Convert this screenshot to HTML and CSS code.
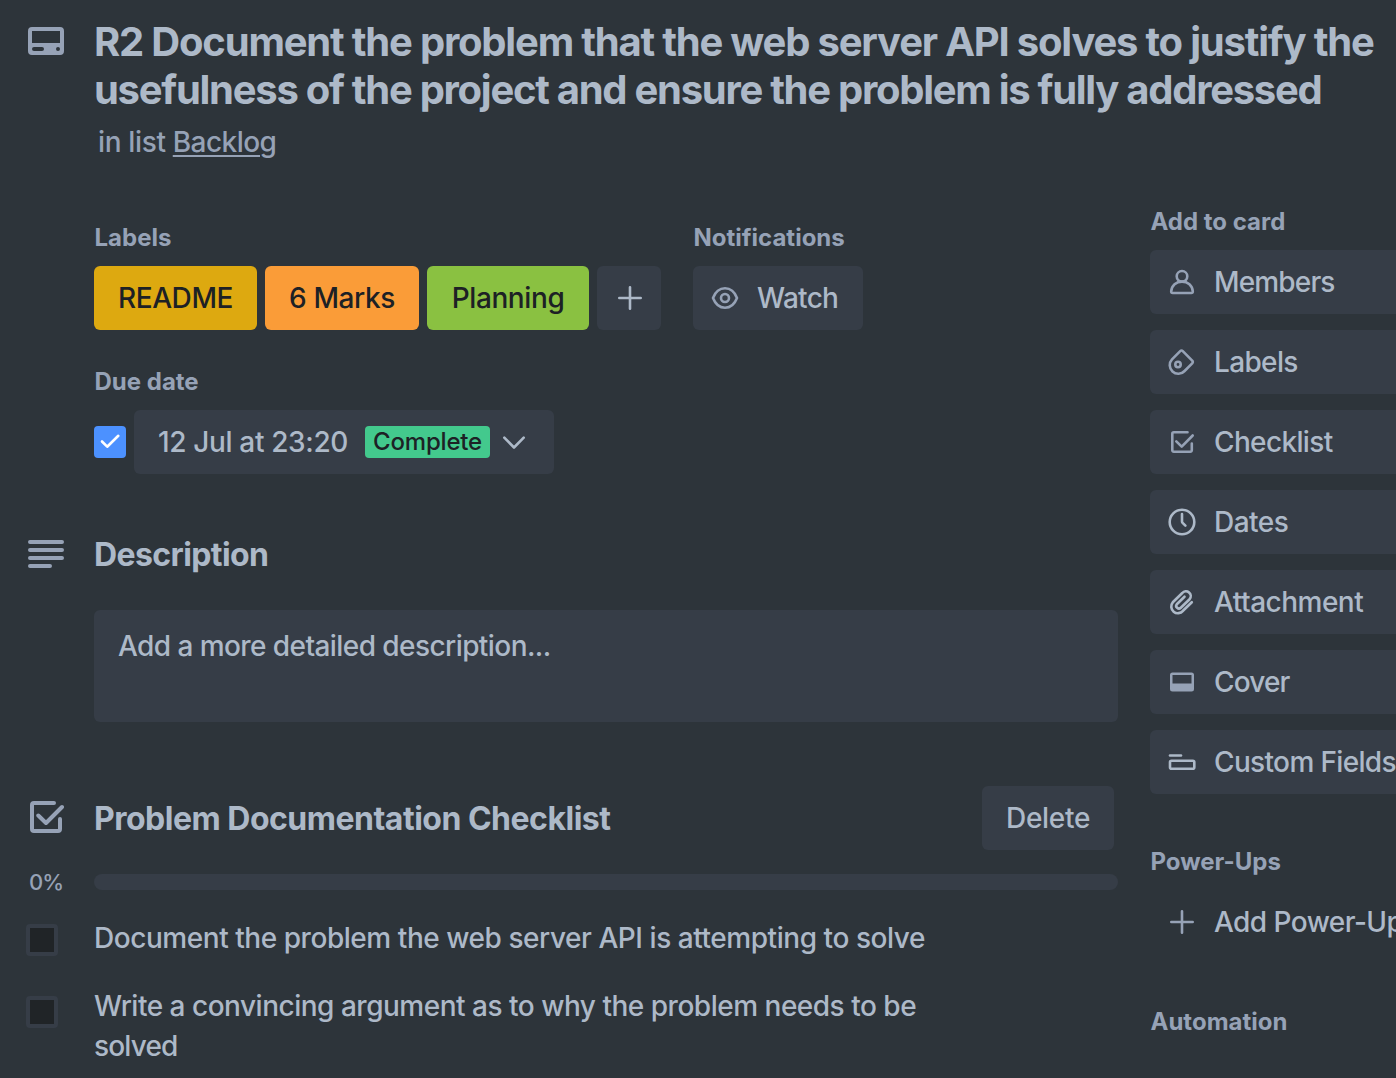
FILE: index.html
```html
<!DOCTYPE html>
<html lang="en">
<head>
<meta charset="utf-8">
<title>Card details</title>
<link rel="stylesheet" href="styles.css">
</head>
<body>
<div class="card">
  <header class="card-header">
    <svg class="icon-lg" viewBox="0 0 36 28"><path fill="currentColor" fill-rule="evenodd" d="M4 0h28a4 4 0 0 1 4 4v20a4 4 0 0 1-4 4H4a4 4 0 0 1-4-4V4a4 4 0 0 1 4-4zM4 4v12h28V4zM6 20a2 2 0 0 0 0 4h8a2 2 0 0 0 0-4zM30 20a2 2 0 1 0 0 4a2 2 0 1 0 0-4z"/></svg>
    <div>
      <h1 class="title"><span class="title-a">R2 Document the problem that the web server API solves to justify the</span><br><span class="title-b">usefulness of the project and ensure the problem is fully addressed</span></h1>
      <p class="subtitle">in list <a class="list-link">Backlog</a></p>
    </div>
  </header>

  <div class="columns">
    <main class="main">
      <div class="details">
        <section class="labels-group">
          <h3 class="caption">Labels</h3>
          <div class="row">
            <span class="label label-yellow">README</span>
            <span class="label label-orange">6 Marks</span>
            <span class="label label-green">Planning</span>
            <span class="button button-plus"><svg class="icon" viewBox="0 0 32 32"><path class="line" d="M17 5.300v21.400M6.300 16h21.400"/></svg></span>
          </div>
        </section>
        <section>
          <h3 class="caption">Notifications</h3>
          <div class="button button-watch">
            <svg class="icon muted" viewBox="0 0 32 32"><path class="line" d="M4 16C6.500 9.500 10.500 6.300 16 6.300S25.500 9.500 28 16C25.500 22.500 21.500 25.700 16 25.700S6.500 22.500 4 16z"/><circle class="line" cx="16" cy="16" r="4"/></svg>
            <span class="watch-text">Watch</span>
          </div>
        </section>
      </div>

      <section class="due">
        <h3 class="caption">Due date</h3>
        <div class="row due-row">
          <span class="check"><svg class="check-mark" viewBox="0 0 32 32"><path d="M8 15.500l5.200 5.200L24.300 9.800"/></svg></span>
          <div class="button due-button">
            <span class="due-text">12 Jul at 23:20</span>
            <span class="badge">Complete</span>
            <svg class="icon" viewBox="0 0 32 32"><path class="line" d="M6.300 11.700l9.700 9.800 9.700-9.800"/></svg>
          </div>
        </div>
      </section>

      <section class="section description">
        <svg class="icon-lg" viewBox="0 0 36 28"><path class="line-lg" d="M2 2h32M2 10h32M2 18h32M2 26h20"/></svg>
        <h2 class="heading desc-heading">Description</h2>
      </section>
      <div class="textarea"><span class="textarea-text">Add a more detailed description...</span></div>

      <section class="section checklist">
        <svg class="icon-lg check-icon" viewBox="0 0 36 34"><path class="line-lg" d="M26 3H6a2 2 0 0 0-2 2v24a2 2 0 0 0 2 2h24a2 2 0 0 0 2-2V19M10.300 15.500l7.700 7.500L34 7"/></svg>
        <h2 class="heading check-heading">Problem Documentation Checklist</h2>
        <div class="button button-delete"><span>Delete</span></div>
      </section>
      <div class="progress"><span class="percent">0%</span><div class="track"></div></div>
      <div class="item"><span class="box"></span><p class="item-text item-one">Document the problem the web server API is attempting to solve</p></div>
      <div class="item item-last"><span class="box"></span><p class="item-text item-two">Write a convincing argument as to why the problem needs to be<br><span class="item-end">solved</span></p></div>
    </main>

    <aside class="sidebar">
      <h3 class="caption">Add to card</h3>
      <div class="side-list">
        <div class="button side"><svg class="icon muted" viewBox="0 0 32 32"><circle class="line" cx="16" cy="10.300" r="5.300"/><path class="line" d="M5.200 25.400C5.600 19.300 10.200 15.600 16 15.600S26.400 19.300 26.800 25.400Q26.900 27 25.300 27H6.700Q5.100 27 5.200 25.400z"/></svg><span class="s-members">Members</span></div>
        <div class="button side"><svg class="icon muted" viewBox="0 0 32 32"><path class="line" d="M14.200 5.200Q15.500 3.900 16.800 5.200L26.200 14.600Q27.400 16 26.200 17.400L18.600 25A8.300 8.300 0 0 1 6 13.400z"/><circle class="line" cx="12" cy="18.500" r="2.700"/></svg><span class="s-labels">Labels</span></div>
        <div class="button side"><svg class="icon muted" viewBox="0 0 32 32"><path class="line" d="M21.500 6.300H7.800a1.500 1.500 0 0 0-1.500 1.500v16.500a1.500 1.500 0 0 0 1.500 1.500h16.500a1.500 1.500 0 0 0 1.500-1.500V17.500M10.300 15.300l5.400 5.400L26.700 9.500"/></svg><span class="s-checklist">Checklist</span></div>
        <div class="button side"><svg class="icon" viewBox="0 0 32 32"><circle class="line" cx="16" cy="16" r="12.300"/><path class="line" d="M16 8v7.500q0 .8.600 1.400l2.800 2.800"/></svg><span class="s-dates">Dates</span></div>
        <div class="button side"><svg class="icon" viewBox="0 0 32 32"><path class="line" d="M25.800 16.200L17 24.800A6 6 0 0 1 6.800 16.300L16.300 7A4.700 4.700 0 0 1 23.600 13.200L14.800 21.800A2.700 2.700 0 0 1 10.800 18.200L18.500 10.700"/></svg><span class="s-attachment">Attachment</span></div>
        <div class="button side"><svg class="icon muted" viewBox="0 0 32 32"><path fill="currentColor" fill-rule="evenodd" d="M6.500 6.500h19a2.500 2.500 0 0 1 2.500 2.500v14a2.500 2.500 0 0 1-2.500 2.500h-19A2.500 2.500 0 0 1 4 23V9a2.500 2.500 0 0 1 2.500-2.500zM6.500 9v8.500h19V9z"/></svg><span class="s-cover">Cover</span></div>
        <div class="button side"><svg class="icon" viewBox="0 0 32 32"><path class="line" d="M4 9.500h11"/><rect class="line" x="4" y="14.700" width="24.300" height="8" rx="1.500"/></svg><span class="s-custom">Custom Fields</span></div>
      </div>
      <h3 class="caption powerups">Power-Ups</h3>
      <div class="side add-power"><svg class="icon muted" viewBox="0 0 32 32"><path class="line" d="M16 5.300v21.400M5.300 16h21.400"/></svg><span class="s-power">Add Power-Ups</span></div>
      <h3 class="caption automation">Automation</h3>
    </aside>
  </div>
</div>
</body>
</html>
```
FILE: styles.css
```css
* { box-sizing: border-box; }

body {
  margin: 0;
  width: 1396px;
  height: 1078px;
  overflow: hidden;
  background: #2d343a;
  color: #adb9c8;
  font: 460 28px/40px Inter, "Liberation Sans", sans-serif;
  letter-spacing: -0.5px;
  white-space: nowrap;
}

h1, h2, h3, p { margin: 0; }

.card { height: 1078px; overflow: hidden; }
.card-header { display: flex; padding: 18px 0 0 28px; height: 204px; }
.card-header .icon-lg { margin-top: 9px; }
.icon-lg { width: 36px; height: 28px; margin-right: 30px; flex: none; color: #96a2b6; }
.title { font-size: 40px; line-height: 48px; font-weight: 660; letter-spacing: -1.2px; }
.title-b { letter-spacing: -1.28px; }
.subtitle { padding: 8px 0 0 4px; color: #96a2b6; letter-spacing: -0.35px; }
.list-link { letter-spacing: -0.55px; text-decoration: underline; text-decoration-thickness: 2px; text-underline-offset: 3px; }

.columns { display: flex; gap: 32px; }
.main { width: 1118px; flex: none; padding: 16px 0 0 94px; }
.sidebar { width: 278px; flex: none; }

.caption { height: 46px; font-size: 24px; line-height: 36px; font-weight: 660; letter-spacing: 0; padding-left: 0.5px; color: #96a2b6; }
.details { display: flex; gap: 32px; height: 144px; }
.labels-group { width: 567px; }
.row { display: flex; gap: 8px; }

.label { height: 64px; line-height: 64px; border-radius: 6px; text-align: center; font-weight: 500; letter-spacing: -0.4px; color: #1d2125; }
.label-yellow { width: 163px; background: #dda910; }
.label-orange { width: 154px; background: #fa9c38; }
.label-green { width: 162px; background: #8ac141; }

.button { display: flex; align-items: center; height: 64px; border-radius: 6px; background: #363d47; }
.button-plus { width: 64px; justify-content: center; }
.button-watch { width: 170px; padding-left: 16px; gap: 16px; letter-spacing: -0.7px; }

.icon { width: 32px; height: 32px; flex: none; }
.muted { color: #96a2b6; }
.line, .line-lg { fill: none; stroke: currentColor; stroke-width: 2.6; stroke-linecap: round; stroke-linejoin: round; }
.line-lg { stroke-width: 4; }

.due { height: 144px; }
.due-row { align-items: center; }
.check { width: 32px; height: 32px; border-radius: 4px; background: #4c91ff; }
.check-mark { display: block; width: 32px; height: 32px; fill: none; stroke: #fff; stroke-width: 2.6; stroke-linecap: round; stroke-linejoin: round; }
.due-button { width: 420px; padding-left: 24px; }
.due-text { width: 207px; letter-spacing: -0.35px; }
.badge { width: 125px; height: 32px; margin-right: 8px; border-radius: 4px; background: #43c98d; color: #1d2125; font-size: 24px; line-height: 32px; letter-spacing: -0.2px; text-align: center; }

.section { display: flex; align-items: center; margin-left: -66px; }
.heading { padding-top: 2px; font-size: 32px; line-height: 40px; font-weight: 660; letter-spacing: -0.5px; }
.desc-heading { letter-spacing: -0.6px; }
.description { height: 64px; margin-top: 14px; margin-bottom: 24px; padding-bottom: 1px; }
.textarea { width: 1024px; height: 112px; padding: 16px 24px; border-radius: 6px; background: #363d47; letter-spacing: -0.57px; }

.checklist { height: 64px; margin-top: 64px; }
.check-icon { height: 34px; margin-top: -2px; }
.check-heading { width: 888px; }
.button-delete { width: 132px; justify-content: center; letter-spacing: -0.3px; }

.progress { display: flex; align-items: center; height: 64px; margin-left: -66px; }
.percent { width: 66px; padding-left: 1px; font-size: 22px; letter-spacing: -0.9px; color: #96a2b6; }
.track { width: 1024px; height: 16px; border-radius: 8px; background: #363d47; }
.item { display: flex; height: 72px; margin-left: -68px; padding-top: 4px; letter-spacing: -0.45px; }
.item-last { height: 92px; padding-top: 0; letter-spacing: -0.49px; }
.item-end { letter-spacing: -0.85px; }
.box { width: 32px; height: 32px; margin: 6px 36px 0 0; border: 4px solid #363d47; border-radius: 4px; background: #202427; flex: none; }
.item-last .box { margin-top: 10px; }

.side-list { display: flex; flex-direction: column; gap: 16px; }
.side { display: flex; align-items: center; width: 278px; height: 64px; padding-left: 16px; gap: 16px; letter-spacing: -0.65px; }
.s-members, .s-cover { letter-spacing: -0.85px; }
.s-dates, .s-attachment { letter-spacing: -0.5px; }
.s-power { letter-spacing: -0.55px; }
.powerups { margin-top: 50px; height: 46px; }
.automation { margin-top: 50px; }
```
